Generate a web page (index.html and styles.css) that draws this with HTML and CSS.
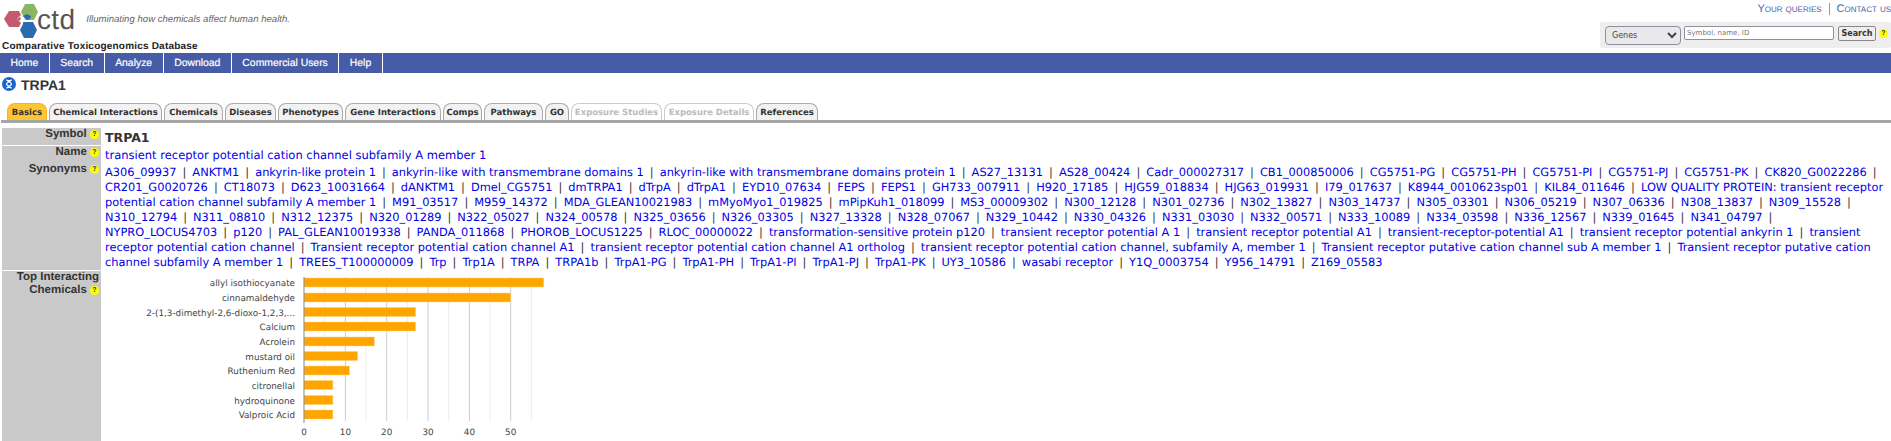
FILE: index.html
```html
<!DOCTYPE html>
<html lang="en">
<head>
<meta charset="utf-8">
<title>TRPA1 | CTD</title>
<link rel="stylesheet" href="styles.css">
</head>
<body>
<header class="header">
  <div class="brand">
    <div class="logo-row">
      <svg class="logo" width="38" height="36" viewBox="0 0 38 36">
        <polygon points="2,17 7,9 17,9 21,17 17,25 7,25" fill="#c55a6e"/>
        <polygon points="19,10 23,2 32,2 36,10 32,18 23,18" fill="#8bb661"/>
        <polygon points="18,28 22,20 31,20 35,28 31,36 22,36" fill="#2a6bb0"/>
        <polygon points="15,17 19,13 23,17 19,21" fill="#fff"/>
        <path d="M21 14l4-2 4 2-1 3-3 1zM21 20l3 1 1 3-4-1z" fill="#2a6bb0"/>
        <path d="M15 17l3-2 1 2-2 2z" fill="#c55a6e"/>
      </svg>
      <span class="logo-text">ctd</span>
      <span class="tagline">Illuminating how chemicals affect human health.</span>
    </div>
    <div class="site-name">Comparative Toxicogenomics Database</div>
  </div>
  <div class="tools">
    <div class="top-links"><a href="#">Your queries</a><span class="top-sep"></span><a href="#">Contact us</a></div>
    <form class="search">
      <select class="search-type"><option>Genes</option></select>
      <input class="search-input" type="text" placeholder="Symbol, name, ID">
      <button class="search-btn" type="button">Search</button>
      <span class="help help-search">?</span>
    </form>
  </div>
</header>

<nav class="nav">
  <a href="#">Home</a><a href="#">Search</a><a href="#">Analyze</a><a href="#">Download</a><a href="#">Commercial Users</a><a href="#">Help</a>
</nav>

<h1 class="title">
  <svg class="gene-icon" width="14" height="14" viewBox="0 0 14 14">
    <circle cx="7" cy="7" r="7" fill="#1a66d0"/>
    <path d="M4.5 2.5c0 2 5 2.500 5 4.500s-5 2.500-5 4.500M9.500 2.500c0 2-5 2.500-5 4.500s5 2.500 5 4.500M5 3.500h4M5 10.500h4" fill="none" stroke="#fff" stroke-width="1.200"/>
  </svg>
  TRPA1
</h1>

<div class="tabs">
  <a class="tab active tab-basics" href="#">Basics</a>
  <a class="tab tab-ci" href="#">Chemical Interactions</a>
  <a class="tab tab-ch" href="#">Chemicals</a>
  <a class="tab tab-di" href="#">Diseases</a>
  <a class="tab tab-ph" href="#">Phenotypes</a>
  <a class="tab tab-gi" href="#">Gene Interactions</a>
  <a class="tab tab-co" href="#">Comps</a>
  <a class="tab tab-pa" href="#">Pathways</a>
  <a class="tab tab-go" href="#">GO</a>
  <a class="tab disabled tab-es" href="#">Exposure Studies</a>
  <a class="tab disabled tab-ed" href="#">Exposure Details</a>
  <a class="tab tab-re" href="#">References</a>
</div>

<main class="data">
  <div class="row row-symbol">
    <div class="label">Symbol <span class="help">?</span></div>
    <div class="value symbol">TRPA1</div>
  </div>
  <div class="row row-name">
    <div class="label">Name <span class="help">?</span></div>
    <div class="value"><a href="#">transient receptor potential cation channel subfamily A member 1</a></div>
  </div>
  <div class="row row-syn">
    <div class="label">Synonyms <span class="help">?</span></div>
    <div class="value synonyms">
<a href="#">A306_09937</a> | <a href="#">ANKTM1</a> | <a href="#">ankyrin-like protein 1</a> | <a href="#">ankyrin-like with transmembrane domains 1</a> | <a href="#">ankyrin-like with transmembrane domains protein 1</a> | <a href="#">AS27_13131</a> | <a href="#">AS28_00424</a> | <a href="#">Cadr_000027317</a> | <a href="#">CB1_000850006</a> | <a href="#">CG5751-PG</a> | <a href="#">CG5751-PH</a> | <a href="#">CG5751-PI</a> | <a href="#">CG5751-PJ</a> | <a href="#">CG5751-PK</a> | <a href="#">CK820_G0022286</a> |<br>
<a href="#">CR201_G0020726</a> | <a href="#">CT18073</a> | <a href="#">D623_10031664</a> | <a href="#">dANKTM1</a> | <a href="#">Dmel_CG5751</a> | <a href="#">dmTRPA1</a> | <a href="#">dTrpA</a> | <a href="#">dTrpA1</a> | <a href="#">EYD10_07634</a> | <a href="#">FEPS</a> | <a href="#">FEPS1</a> | <a href="#">GH733_007911</a> | <a href="#">H920_17185</a> | <a href="#">HJG59_018834</a> | <a href="#">HJG63_019931</a> | <a href="#">I79_017637</a> | <a href="#">K8944_0010623sp01</a> | <a href="#">KIL84_011646</a> | <a href="#">LOW QUALITY PROTEIN: transient receptor<br>potential cation channel subfamily A member 1</a> | <a href="#">M91_03517</a> | <a href="#">M959_14372</a> | <a href="#">MDA_GLEAN10021983</a> | <a href="#">mMyoMyo1_019825</a> | <a href="#">mPipKuh1_018099</a> | <a href="#">MS3_00009302</a> | <a href="#">N300_12128</a> | <a href="#">N301_02736</a> | <a href="#">N302_13827</a> | <a href="#">N303_14737</a> | <a href="#">N305_03301</a> | <a href="#">N306_05219</a> | <a href="#">N307_06336</a> | <a href="#">N308_13837</a> | <a href="#">N309_15528</a> |<br>
<a href="#">N310_12794</a> | <a href="#">N311_08810</a> | <a href="#">N312_12375</a> | <a href="#">N320_01289</a> | <a href="#">N322_05027</a> | <a href="#">N324_00578</a> | <a href="#">N325_03656</a> | <a href="#">N326_03305</a> | <a href="#">N327_13328</a> | <a href="#">N328_07067</a> | <a href="#">N329_10442</a> | <a href="#">N330_04326</a> | <a href="#">N331_03030</a> | <a href="#">N332_00571</a> | <a href="#">N333_10089</a> | <a href="#">N334_03598</a> | <a href="#">N336_12567</a> | <a href="#">N339_01645</a> | <a href="#">N341_04797</a> |<br>
<a href="#">NYPRO_LOCUS4703</a> | <a href="#">p120</a> | <a href="#">PAL_GLEAN10019338</a> | <a href="#">PANDA_011868</a> | <a href="#">PHOROB_LOCUS1225</a> | <a href="#">RLOC_00000022</a> | <a href="#">transformation-sensitive protein p120</a> | <a href="#">transient receptor potential A 1</a> | <a href="#">transient receptor potential A1</a> | <a href="#">transient-receptor-potential A1</a> | <a href="#">transient receptor potential ankyrin 1</a> | <a href="#">transient<br>receptor potential cation channel</a> | <a href="#">Transient receptor potential cation channel A1</a> | <a href="#">transient receptor potential cation channel A1 ortholog</a> | <a href="#">transient receptor potential cation channel, subfamily A, member 1</a> | <a href="#">Transient receptor putative cation channel sub A member 1</a> | <a href="#">Transient receptor putative cation<br>channel subfamily A member 1</a> | <a href="#">TREES_T100000009</a> | <a href="#">Trp</a> | <a href="#">Trp1A</a> | <a href="#">TRPA</a> | <a href="#">TRPA1b</a> | <a href="#">TrpA1-PG</a> | <a href="#">TrpA1-PH</a> | <a href="#">TrpA1-PI</a> | <a href="#">TrpA1-PJ</a> | <a href="#">TrpA1-PK</a> | <a href="#">UY3_10586</a> | <a href="#">wasabi receptor</a> | <a href="#">Y1Q_0003754</a> | <a href="#">Y956_14791</a> | <a href="#">Z169_05583</a>
    </div>
  </div>
  <div class="row row-chart">
    <div class="label label-chart">Top Interacting<br>Chemicals <span class="help">?</span></div>
    <div class="value chart-cell">
      <svg class="chart" width="520" height="171" viewBox="0 0 520 171">
        <g class="grid-minor">
          <line x1="221.700" y1="6" x2="221.700" y2="150"/><line x1="263" y1="6" x2="263" y2="150"/><line x1="304.400" y1="6" x2="304.400" y2="150"/><line x1="345.700" y1="6" x2="345.700" y2="150"/><line x1="387" y1="6" x2="387" y2="150"/><line x1="428.400" y1="6" x2="428.400" y2="150"/>
        </g>
        <g class="grid-major">
          <line x1="242.400" y1="6" x2="242.400" y2="150"/><line x1="283.700" y1="6" x2="283.700" y2="150"/><line x1="325" y1="6" x2="325" y2="150"/><line x1="366.400" y1="6" x2="366.400" y2="150"/><line x1="407.700" y1="6" x2="407.700" y2="150"/>
        </g>
        <g class="bars">
          <rect x="201" y="7" width="239.800" height="9"/>
          <rect x="201" y="22" width="206.700" height="9"/>
          <rect x="201" y="36.500" width="111.600" height="9"/>
          <rect x="201" y="51" width="111.600" height="9"/>
          <rect x="201" y="66" width="70.300" height="9"/>
          <rect x="201" y="80.500" width="53.700" height="9"/>
          <rect x="201" y="95" width="45.500" height="9"/>
          <rect x="201" y="109.500" width="28.900" height="9"/>
          <rect x="201" y="124.500" width="28.900" height="9"/>
          <rect x="201" y="139" width="28.900" height="9"/>
        </g>
        <line class="axis" x1="201" y1="6" x2="201" y2="152"/>
        <g class="cat">
          <text x="192" y="15">allyl isothiocyanate</text>
          <text x="192" y="30">cinnamaldehyde</text>
          <text x="192" y="44.500">2-(1,3-dimethyl-2,6-dioxo-1,2,3,...</text>
          <text x="192" y="59">Calcium</text>
          <text x="192" y="74">Acrolein</text>
          <text x="192" y="88.500">mustard oil</text>
          <text x="192" y="103">Ruthenium Red</text>
          <text x="192" y="117.500">citronellal</text>
          <text x="192" y="132.500">hydroquinone</text>
          <text x="192" y="147">Valproic Acid</text>
        </g>
        <g class="tick">
          <text x="201" y="164">0</text><text x="242.400" y="164">10</text><text x="283.700" y="164">20</text><text x="325" y="164">30</text><text x="366.400" y="164">40</text><text x="407.700" y="164">50</text>
        </g>
      </svg>
    </div>
  </div>
</main>
</body>
</html>
```
FILE: styles.css
```css
html, body { margin: 0; padding: 0; height: 441px; overflow: hidden; background: #fff; }
body { font-family: "DejaVu Sans", Verdana, sans-serif; color: #333; text-rendering: geometricPrecision; }
a { text-decoration: none; }

.header { display: flex; justify-content: space-between; height: 53px; }
.brand { display: flex; flex-direction: column; padding-left: 2px; }
.logo-row { display: flex; align-items: center; height: 40px; }
.logo { flex: none; margin-top: -1px; }
.logo-text { font: 28px/1 "Liberation Sans", Arial, sans-serif; color: #555; letter-spacing: .3px; margin: 0 11px 0 -3px; }
.tagline { font: italic 9.600px "Liberation Sans", Arial, sans-serif; color: #666; margin-top: -2px; }
.site-name { font: bold 10px/13px "Liberation Sans", Arial, sans-serif; color: #222; letter-spacing: .2px; }

.tools { display: flex; flex-direction: column; align-items: flex-end; }
.top-links { display: flex; align-items: center; height: 18px; font: 11px "Liberation Sans", Arial, sans-serif; font-variant: small-caps; }
.top-links a { color: #4a5fa8; }
.top-sep { width: 1px; height: 12px; background: #999; margin: 0 7px; }
.search { display: flex; align-items: flex-start; width: 291px; height: 26px; box-sizing: border-box; margin-top: 4px; padding: 4px 0 0 5px; background: #eee; border-radius: 2px; }
.search-type { width: 76px; height: 19px; font: 8px "DejaVu Sans", sans-serif; color: #444; background: #e9e9ed; border: 1px solid #8f8f9d; border-radius: 4px; padding: 0 2px; margin: 0 3px 0 0; }
.search-input { width: 150px; height: 14px; box-sizing: border-box; font: 7px "DejaVu Sans", sans-serif; border: 1px solid #8f8f9d; border-radius: 2px; padding: 0 2px; margin: 0 4px 0 0; background: #fff; }
.search-input::placeholder { color: #777; }
.search-btn { width: 38px; height: 15px; box-sizing: border-box; font: bold 8px "DejaVu Sans", sans-serif; color: #333; background: #eee; border: 1px solid #888; border-radius: 2px; padding: 0; margin: 0; }
.help { display: inline-block; width: 9px; height: 9px; border-radius: 50%; background: #ff0; color: #333; font: bold 7px/9px "Liberation Sans", Arial, sans-serif; text-align: center; vertical-align: 1px; }
.help-search { margin: 3px 0 0 3px; }

.nav { display: flex; height: 20px; background: #465ca6; }
.nav a { box-sizing: border-box; padding: 0 10.500px; font: 10.400px/22px "Liberation Sans", Arial, sans-serif; color: #fff; border-right: 1px solid #fff; -webkit-text-stroke: .2px #fff; }

.title { display: flex; align-items: flex-start; gap: 5px; height: 30px; margin: 0; padding: 4px 0 0 2px; box-sizing: border-box; font: bold 14px/17px "Liberation Sans", Arial, sans-serif; color: #333; }
.gene-icon { flex: none; margin-top: 0; }

.tabs { display: flex; height: 20px; box-sizing: border-box; padding: 0 0 0 6px; gap: 2px; border-bottom: 3px solid #a6a6a6; margin: 0 0 0 1px; width: 1890px; }
.tab { box-sizing: border-box; height: 17px; text-align: center; font: bold 8.500px/18px "DejaVu Sans", Verdana, sans-serif; color: #333; background: #f2f2f2; border: 1px solid #aaa; border-bottom: 0; border-radius: 8px 8px 0 0; }
.tab.active { background: #fdc52e; border-color: #f0b429; }
.tab.disabled { color: #bbb; background: #fff; border-color: #ccc; }
.tab-basics { width: 40px; }
.tab-ci { width: 113px; }
.tab-ch { width: 59px; }
.tab-di { width: 51px; }
.tab-ph { width: 65px; }
.tab-gi { width: 96px; }
.tab-co { width: 39px; }
.tab-pa { width: 59px; }
.tab-go { width: 24px; }
.tab-es { width: 91px; }
.tab-ed { width: 90px; }
.tab-re { width: 62px; }

.data { margin-top: 5px; }
.row { display: flex; }
.label { flex: none; box-sizing: border-box; width: 99px; margin-left: 2px; padding-right: 2px; background: #c9c9c9; text-align: right; font: bold 11.500px/13px "Liberation Sans", Arial, sans-serif; color: #333; }
.value { padding-left: 4px; font-size: 11.500px; line-height: 15px; color: #333; }
.value a { color: #0000e6; }
.row-symbol { height: 17px; margin-bottom: 1px; }
.symbol { font-weight: bold; font-size: 12.500px; line-height: 18px; padding-top: 1px; }
.row-name { height: 17px; }
.row-name .value { padding-top: 2px; }
.row-syn { height: 107px; margin-bottom: 1px; }
.row-syn .value { white-space: nowrap; padding-top: 2px; font-size: 11.400px; }
.synonyms a { margin: 0 2.400px; }
.synonyms a:first-child, .synonyms br + a { margin-left: 0; }
.row-chart { height: 171px; }
.chart-cell { padding: 0; }
.chart { display: block; margin-left: 2px; }
.grid-minor line { stroke: #eee; stroke-width: 1; }
.grid-major line { stroke: #ccc; stroke-width: 1; }
.bars rect { fill: #ffa500; stroke: #ffd27a; stroke-width: .5; }
.axis { stroke: #888; stroke-width: 1; }
.cat text { font: 8.800px "DejaVu Sans", sans-serif; fill: #444; text-anchor: end; }
.tick text { font: 8.800px "DejaVu Sans", sans-serif; fill: #444; text-anchor: middle; }
```
